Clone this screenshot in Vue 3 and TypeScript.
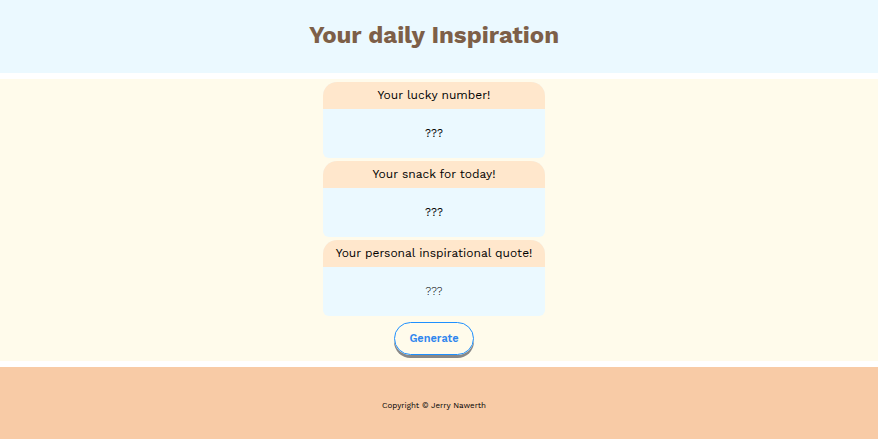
<script setup lang="ts">
import { ref } from 'vue'

interface Card {
  title: string
  value: string
  quote: boolean
}

const cards = ref<Card[]>([
  { title: 'Your lucky number!', value: '???', quote: false },
  { title: 'Your snack for today!', value: '???', quote: false },
  { title: 'Your personal inspirational quote!', value: '???', quote: true },
])

const snacks: string[] = ['Apple', 'Popcorn', 'Pretzel', 'Carrot sticks']
const quotes: string[] = ['Keep going.', 'Small steps count.', 'Today is yours.']

function pick(list: string[]): string {
  return list[Math.floor(Math.random() * list.length)]
}

function generate(): void {
  cards.value[0].value = String(Math.floor(Math.random() * 100) + 1)
  cards.value[1].value = pick(snacks)
  cards.value[2].value = pick(quotes)
}
</script>

<template>
  <div class="page">
    <header class="header">
      <h1>Your daily Inspiration</h1>
    </header>
    <main class="main">
      <section v-for="card in cards" :key="card.title" class="card">
        <h2>{{ card.title }}</h2>
        <p :class="{ quote: card.quote }">{{ card.value }}</p>
      </section>
      <button type="button" class="generate" @click="generate">Generate</button>
    </main>
    <footer class="footer">
      <p>Copyright © Jerry Nawerth</p>
    </footer>
  </div>
</template>

<style>
body {
  margin: 0;
}
</style>

<style scoped>
.page {
  display: flex;
  flex-direction: column;
  gap: 6px;
  min-height: 100vh;
  background: #fff;
  color: #000;
  font-family: 'Work Sans', Inter, sans-serif;
}

h1,
h2,
p {
  margin: 0;
  font-weight: 400;
}

.header,
.main,
.footer {
  box-sizing: border-box;
  padding-right: 10px;
}

.header {
  padding-top: 20px;
  padding-bottom: 23px;
  background: #ebf9ff;
  text-align: center;
}

.header h1 {
  color: #7d5f48;
  font-size: 24px;
  font-weight: 700;
  line-height: 30px;
}

.main {
  display: flex;
  flex-direction: column;
  align-items: center;
  gap: 3px;
  padding-top: 3px;
  padding-bottom: 6px;
  background: #fffbeb;
}

.card {
  width: 25%;
  min-width: 222px;
  border-radius: 14px 14px 6px 6px;
  overflow: hidden;
  background: #ebf9ff;
  text-align: center;
}

.card h2 {
  background: #ffe7cc;
  font-size: 12px;
  line-height: 27px;
}

.card p {
  padding-top: 1px;
  font-size: 11px;
  line-height: 48px;
}

.card .quote {
  font-weight: 300;
}

.generate {
  margin-top: 3px;
  padding: 1px 14px 0;
  border: 1px solid #1e90ff;
  border-radius: 18px;
  background: transparent;
  box-shadow: 0 3px 0 #888;
  color: #2f86ee;
  font-family: inherit;
  font-size: 11px;
  font-weight: 600;
  line-height: 30px;
  cursor: pointer;
}

.footer {
  display: flex;
  flex: 1;
  align-items: center;
  justify-content: center;
  padding-top: 28px;
  padding-bottom: 22px;
  background: #f8cba6;
}

.footer p {
  font-size: 8px;
  line-height: 22px;
}
</style>
